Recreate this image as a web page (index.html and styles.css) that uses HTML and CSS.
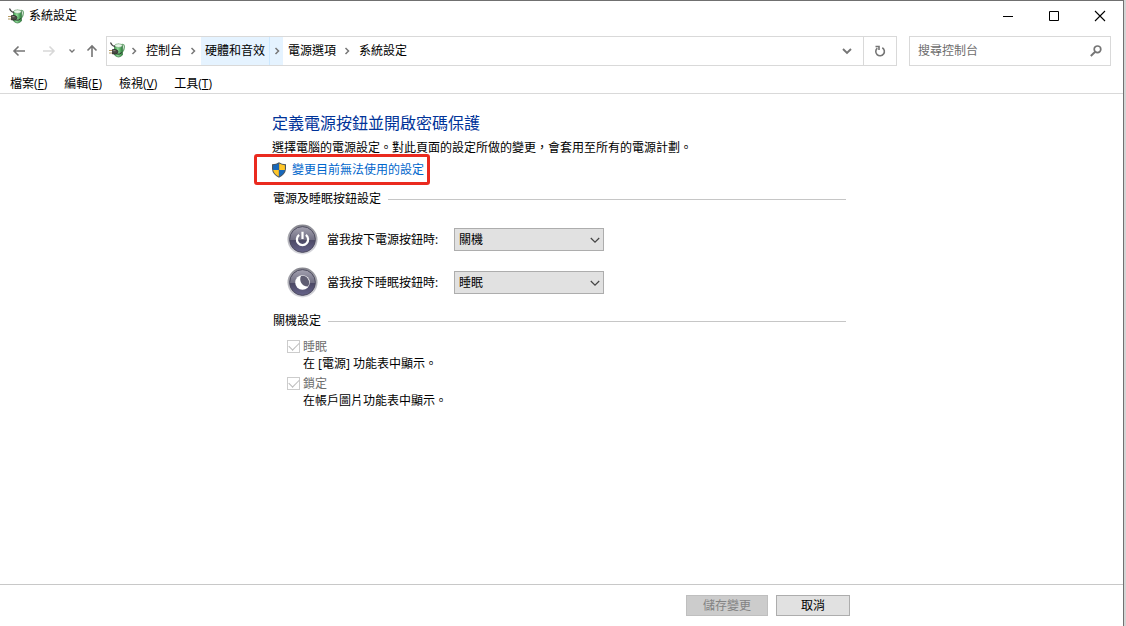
FILE: index.html
```
<!DOCTYPE html>
<html lang="zh-Hant">
<head>
<meta charset="utf-8">
<meta name="viewport" content="width=device-width, initial-scale=1">
<title>系統設定</title>
<link rel="stylesheet" href="styles.css">
</head>
<body>
<svg class="defs" aria-hidden="true">
  <defs>
    <linearGradient id="green" x1="0" y1="0" x2="1" y2="0">
      <stop offset="0" stop-color="#3d9a4a"/><stop offset=".4" stop-color="#8fdc98"/><stop offset="1" stop-color="#2a7d38"/>
    </linearGradient>
    <linearGradient id="rim" x1="0" y1="0" x2="0" y2="1">
      <stop offset="0" stop-color="#85858d"/><stop offset="1" stop-color="#dcdce2"/>
    </linearGradient>
    <linearGradient id="face" x1="0" y1="0" x2="0" y2="1">
      <stop offset="0" stop-color="#a3a1b0"/><stop offset=".5" stop-color="#727084"/><stop offset=".54" stop-color="#4c4965"/><stop offset="1" stop-color="#66638a"/>
    </linearGradient>
    <symbol id="power-options" viewBox="0 0 16 16">
      <path d="M11.500 2.800Q15.800 1.500 15.300 5.500T12.800 10" fill="none" stroke="#6fa877" stroke-width="1.300"/>
      <path d="M5.500 3.500Q9.500 1 13.500 3.500V13Q9.500 17 5.500 13Z" fill="url(#green)" stroke="#3a7543" stroke-width=".7"/>
      <ellipse cx="9.500" cy="3.600" rx="3.700" ry="1.800" fill="#eaf7eb" stroke="#6b9d70" stroke-width=".6"/>
      <path d="M1.500.5Q2.500 3.500 6 4.500" fill="none" stroke="#444" stroke-width="1.100"/>
      <path d="M0 8.500H3.500M0 11H3.500" stroke="#b59b62" stroke-width="1.100"/>
      <path d="M3.500 7.500H6.500Q9 8 9 9.800T6.500 12H3.500Z" fill="#4a4743" stroke="#222" stroke-width=".7"/>
      <path d="M4.300 8.700H6.500" stroke="#aaa69d" stroke-width=".8"/>
      <path d="M7.500 12Q10.500 13 12.800 10.500" fill="none" stroke="#2c2c2c"/>
    </symbol>
    <symbol id="crumb" viewBox="0 0 8 10"><path d="M2.500 2 5.500 5 2.500 8" fill="none" stroke="#787878" stroke-width="1.500"/></symbol>
    <symbol id="down" viewBox="0 0 12 12"><path d="M1.800 4 6 8.200 10.200 4" fill="none" stroke="currentColor" stroke-width="1.200"/></symbol>
  </defs>
</svg>

<div class="window">
  <header class="titlebar">
    <svg class="app-icon"><use href="#power-options"/></svg>
    <span class="title">系統設定</span>
    <div class="window-controls">
      <button type="button" class="control" aria-label="最小化"><svg viewBox="0 0 12 12"><path d="M1 6.500H11" stroke="#000" fill="none"/></svg></button>
      <button type="button" class="control" aria-label="最大化"><svg viewBox="0 0 12 12"><path d="M1.500 1.500H10.500V10.500H1.500Z" stroke="#000" fill="none"/></svg></button>
      <button type="button" class="control" aria-label="關閉"><svg viewBox="0 0 12 12"><path d="M1 1 11 11M11 1 1 11" stroke="#000" fill="none" stroke-width="1.100"/></svg></button>
    </div>
  </header>

  <nav class="navbar" aria-label="導覽">
    <div class="history">
      <button type="button" class="nav-button" aria-label="上一頁"><svg viewBox="0 0 14 14"><path d="M13 7H2M6.500 2.500 2 7 6.500 11.500" fill="none" stroke="#757575" stroke-width="1.600"/></svg></button>
      <button type="button" class="nav-button" aria-label="下一頁" disabled><svg viewBox="0 0 14 14"><path d="M1 7H12M7.500 2.500 12 7 7.500 11.500" fill="none" stroke="#d8d8d8" stroke-width="1.600"/></svg></button>
      <button type="button" class="nav-button recent" aria-label="最近的位置"><svg viewBox="0 0 8 14"><path d="M1.500 5.500 4 8 6.500 5.500" fill="none" stroke="#757575" stroke-width="1.300"/></svg></button>
      <button type="button" class="nav-button" aria-label="上一層"><svg viewBox="0 0 14 14"><path d="M7 13V2M2.500 6.500 7 2 11.500 6.500" fill="none" stroke="#757575" stroke-width="1.600"/></svg></button>
    </div>
    <div class="address">
      <svg class="app-icon address-icon"><use href="#power-options"/></svg>
      <span class="separator"><svg><use href="#crumb"/></svg></span>
      <a class="crumb" href="#">控制台</a>
      <span class="separator"><svg><use href="#crumb"/></svg></span>
      <a class="crumb active" href="#">硬體和音效</a>
      <span class="separator active"><svg><use href="#crumb"/></svg></span>
      <a class="crumb" href="#">電源選項</a>
      <span class="separator"><svg><use href="#crumb"/></svg></span>
      <a class="crumb" href="#">系統設定</a>
      <button type="button" class="address-button expand" aria-label="先前的位置"><svg viewBox="0 0 12 12"><path d="M2 4 6 8 10 4" fill="none" stroke="#757575" stroke-width="1.900"/></svg></button>
      <button type="button" class="address-button refresh" aria-label="重新整理"><svg viewBox="0 0 12 12"><path d="M8.300 2.800A4.300 4.300 0 1 1 3.300 3.200" fill="none" stroke="#757575" stroke-width="1.600"/><path d="M1.500 1.500H5V5" fill="none" stroke="#757575" stroke-width="1.600"/></svg></button>
    </div>
    <div class="search">
      <input type="search" class="search-input" placeholder="搜尋控制台" aria-label="搜尋控制台">
      <button type="button" class="search-button" aria-label="搜尋"><svg viewBox="0 0 12 12"><circle cx="7.500" cy="4.300" r="3.300" fill="none" stroke="#757575" stroke-width="1.700"/><path d="M5.200 6.700.8 11" stroke="#757575" stroke-width="1.900"/></svg></button>
    </div>
  </nav>

  <div class="menubar">
    <button type="button" class="menu">檔案(<u>F</u>)</button>
    <button type="button" class="menu">編輯(<u>E</u>)</button>
    <button type="button" class="menu">檢視(<u>V</u>)</button>
    <button type="button" class="menu">工具(<u>T</u>)</button>
  </div>

  <main class="content">
    <h1 class="heading">定義電源按鈕並開啟密碼保護</h1>
    <p class="intro">選擇電腦的電源設定。對此頁面的設定所做的變更，會套用至所有的電源計劃。</p>
    <div class="unlock">
      <svg class="shield" viewBox="1 0 14 16">
        <path d="M8 .2Q10.500 2 15 2.200V7Q14.500 12.500 8 15.800 1.500 12.500 1 7V2.200Q5.500 2 8 .2Z" fill="#4c565f"/>
        <path d="M7.800 1.600V8H2.100V3.200Q5.800 2.800 7.800 1.600Z" fill="#1768bb"/>
        <path d="M8.200 1.600Q10.200 2.800 13.900 3.200V8H8.200Z" fill="#ffc629"/>
        <path d="M2.200 8H7.800V14.600Q3 12 2.200 8Z" fill="#ffc629"/>
        <path d="M8.200 8H13.800Q13 12 8.200 14.600Z" fill="#1768bb"/>
      </svg>
      <a class="unlock-link" href="#">變更目前無法使用的設定</a>
      <span class="highlight"></span>
    </div>

    <section class="group">
      <h2 class="legend">電源及睡眠按鈕設定</h2>
      <div class="setting">
        <svg class="round-icon" viewBox="0 0 32 32">
          <circle cx="16" cy="16" r="15.500" fill="url(#rim)"/><circle cx="16" cy="16" r="13.300" fill="url(#face)" stroke="#4a485c"/>
          <path d="M12.500 11.300A5.800 5.800 0 1 0 19.500 11.300" fill="none" stroke="#fff" stroke-width="2.300"/>
          <path d="M16 8V15.500" stroke="#fff" stroke-width="2.300"/>
        </svg>
        <label for="power">當我按下電源按鈕時:</label>
        <span class="dropdown"><select id="power"><option>關機</option><option>睡眠</option></select><svg><use href="#down"/></svg></span>
      </div>
      <div class="setting">
        <svg class="round-icon" viewBox="0 0 32 32">
          <circle cx="16" cy="16" r="15.500" fill="url(#rim)"/><circle cx="16" cy="16" r="13.300" fill="url(#face)" stroke="#4a485c"/>
          <circle cx="16" cy="16" r="7.500" fill="#fff"/>
          <path d="M14.500 9.200A7 7 0 0 1 21.500 20.200Q16.500 20 14.600 16.200T14.500 9.200Z" fill="#5f5d72"/>
        </svg>
        <label for="sleep">當我按下睡眠按鈕時:</label>
        <span class="dropdown"><select id="sleep"><option>睡眠</option><option>關機</option></select><svg><use href="#down"/></svg></span>
      </div>
    </section>

    <section class="group">
      <h2 class="legend">關機設定</h2>
      <div class="option">
        <input type="checkbox" id="show-sleep" checked disabled>
        <label for="show-sleep">睡眠</label>
        <p class="hint">在 [電源] 功能表中顯示。</p>
      </div>
      <div class="option">
        <input type="checkbox" id="show-lock" checked disabled>
        <label for="show-lock">鎖定</label>
        <p class="hint">在帳戶圖片功能表中顯示。</p>
      </div>
    </section>
  </main>

  <footer class="actions">
    <button type="button" class="action save" disabled>儲存變更</button>
    <button type="button" class="action">取消</button>
  </footer>
</div>
</body>
</html>
```
FILE: styles.css
```
* { box-sizing: border-box; }

body {
  margin: 0;
  background: #d4d4d4;
  color: #000;
  font: 12px/20px "Open Sans", "Noto Sans CJK TC", sans-serif;
}

button, input, select { font: inherit; color: inherit; }
button { margin: 0; padding: 0; border: 0; background: none; }
svg { display: block; flex: none; }
a { color: inherit; text-decoration: none; }
h1, h2, p { margin: 0; font-weight: 400; }

.defs { position: absolute; width: 0; height: 0; }

.window {
  display: flex;
  flex-direction: column;
  min-height: 100vh;
  margin-right: 2px;
  border-top: 1px solid #707070;
  border-right: 1px solid #707070;
  background: #fff;
}

/* Title bar */
.titlebar { display: flex; align-items: center; height: 29px; padding-left: 8px; }
.app-icon { width: 16px; height: 16px; }
.title { margin-left: 5px; }
.window-controls { display: flex; margin-left: auto; }
.control { display: grid; place-items: center; width: 46px; height: 29px; }
.control svg { width: 12px; height: 12px; }

/* Navigation */
.navbar { display: flex; margin-top: 6px; padding: 0 12px; height: 30px; }
.history { display: flex; align-items: center; gap: 16px; width: 94px; flex: none; }
.nav-button svg { width: 14px; height: 14px; }
.nav-button.recent { margin: 0 -7px 0 -4px; }
.recent svg { width: 8px; }

.address { display: flex; align-items: stretch; flex: 1; min-width: 0; border: 1px solid #d9d9d9; }
.address-icon { align-self: center; margin: 0 2px 2px; }
.separator { display: grid; place-items: center; width: 14px; }
.separator svg { width: 8px; height: 10px; }
.crumb { display: flex; align-items: center; padding: 0 4px; white-space: nowrap; }
.crumb.active, .separator.active { background: #e5f3ff; }
.separator.active { border-left: 1px solid #cce8ff; }
.separator + .crumb { margin-left: 1px; }
.address-button { display: grid; place-items: center; width: 33px; }
.address-button svg { width: 12px; height: 12px; }
.expand { width: 32px; margin-left: auto; }
.refresh { border-left: 1px solid #d9d9d9; }

.search { display: flex; width: 202px; margin-left: 12px; border: 1px solid #d9d9d9; }
.search-input { flex: 1; min-width: 0; padding: 0 8px; border: 0; outline: 0; background: none; }
.search-input::placeholder { color: #6d6d6d; opacity: 1; }
.search-button { display: grid; place-items: center; width: 28px; }
.search-button svg { width: 12px; height: 12px; }

/* Menu */
.menubar { display: flex; gap: 17px; height: 28px; padding: 8px 10px 0; border-bottom: 1px solid #d9d9d9; }
.menu { height: 20px; white-space: nowrap; }

/* Page */
.content { flex: 1; width: 100%; max-width: 846px; padding: 17px 0 16px 272px; }
.heading { color: #003399; font-size: 16px; line-height: 24px; }
.intro { padding-top: 1px; line-height: 24px; white-space: nowrap; }
.unlock { display: flex; align-items: center; gap: 6px; position: relative; width: max-content; height: 20px; }
.shield { width: 14px; height: 16px; }
.unlock-link { color: #0066cc; }
.highlight {
  position: absolute;
  inset: -6px -6px -5px -18px;
  border: 3px solid #ea2a1f;
  border-radius: 3px;
  pointer-events: none;
}

.group { margin-top: 7px; padding-left: 1px; }
.legend { display: flex; align-items: center; gap: 7px; margin-bottom: 9px; font-size: 12px; line-height: 20px; }
.legend::after { content: ""; flex: 1; height: 1px; background: #c6c6c6; }
.unlock + .group { margin-top: 9px; }

.setting { display: flex; align-items: center; height: 43px; padding-left: 14px; }
.round-icon { width: 31px; height: 31px; }
.setting label { width: 127px; margin-left: 9px; white-space: nowrap; }
.dropdown { display: grid; width: 150px; height: 23px; }
.dropdown > * { grid-area: 1 / 1; }
.dropdown select {
  appearance: none;
  width: 100%;
  padding: 0 20px 0 4px;
  border: 1px solid #adadad;
  border-radius: 0;
  background: #e1e1e1;
}
.dropdown svg { place-self: center end; width: 12px; height: 12px; margin-right: 3px; color: #444; pointer-events: none; }

.option { display: grid; grid-template-columns: 13px 1fr; column-gap: 3px; align-items: center; margin-bottom: 3px; padding-left: 14px; line-height: 17px; }
.legend + .option { margin-top: -2px; }
.option input {
  appearance: none;
  display: grid;
  place-items: center;
  width: 13px;
  height: 13px;
  margin: 0;
  border: 1px solid #ccc;
}
.option input:checked::before {
  content: "";
  width: 9px;
  height: 5px;
  margin-bottom: 3px;
  border: solid #bcbcbc;
  border-width: 0 0 1px 1px;
  rotate: -45deg;
}
.option label { color: #6d6d6d; }
.hint { grid-column: 2; }

/* Footer */
.actions { display: flex; justify-content: flex-end; gap: 8px; width: 100%; height: 42px; padding: 10px 273px 0 0; border-top: 1px solid #c8c8c8; }
.action { width: 74px; height: 21px; border: 1px solid #adadad; background: #e1e1e1; line-height: 19px; }
.save { width: 82px; border-color: #bfbfbf; background: #ccc; color: #838383; }
```
